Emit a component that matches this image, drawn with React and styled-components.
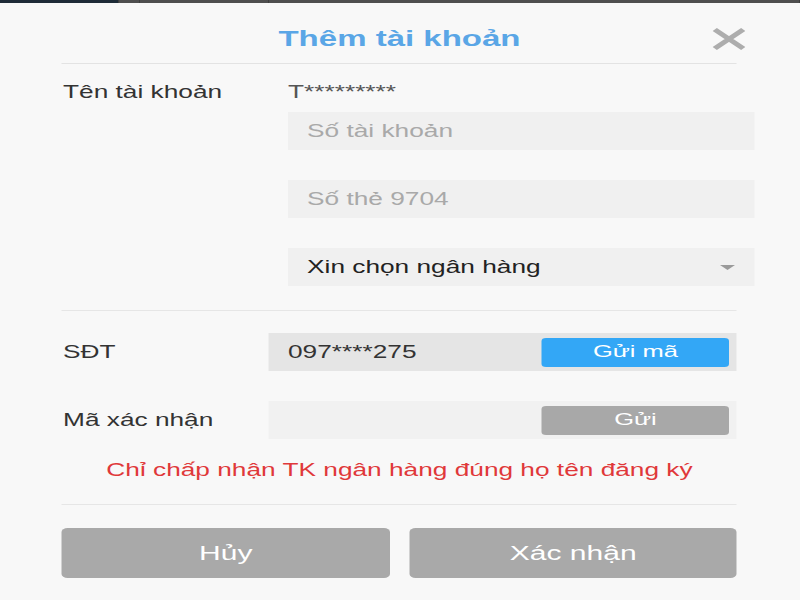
import styled, { createGlobalStyle } from "styled-components";

const GlobalStyle = createGlobalStyle`
  html, body {
    margin: 0;
    padding: 0;
    background: #f8f8f8;
    overflow: hidden;
  }
  body {
    font-family: "Liberation Sans", Arial, sans-serif;
    color: #333;
  }
`;

const Page = styled.div`
  width: 800px;
  height: 600px;
  overflow: hidden;
  background: #f8f8f8;
`;

const TopStrip = styled.div`
  display: flex;
  height: 3px;
`;

const StripSegment = styled.div`
  width: ${(props) => props.width ?? "auto"};
  flex: ${(props) => (props.width ? "none" : 1)};
  background: ${(props) => props.color};
  border-right: 1px solid #3e3e3e;
`;

/* the screenshot is a phone view stretched sideways, so the dialog is laid out narrow and widened */
const Stretch = styled.div`
  width: 533.33px;
  transform: scaleX(1.5);
  transform-origin: left top;
`;

const Dialog = styled.div`
  background: #f8f8f8;
  padding: 0 42px 0 41.33px;
`;

const Header = styled.div`
  position: relative;
  padding: 21px 0 9px;
  text-align: center;
  border-bottom: 1px solid #e3e3e3;
`;

const Title = styled.h2`
  margin: 0;
  font-size: 22px;
  line-height: 30px;
  font-weight: 700;
  color: #5aa6e6;
`;

const CloseButton = styled.button`
  position: absolute;
  top: 25px;
  right: -5.4px;
  width: 22px;
  height: 22px;
  padding: 0;
  border: 0;
  background: none;
  cursor: pointer;

  svg {
    display: block;
  }
`;

const AccountSection = styled.div`
  display: grid;
  grid-template-columns: 150.7px 1fr;
  padding: 18px 0 24px;
  border-bottom: 1px solid #e6e6e6;
`;

const Label = styled.div`
  font-size: 17.5px;
  line-height: 20px;
  color: #333;
  padding-left: 0.7px;
`;

const ValueStack = styled.div`
  display: flex;
  flex-direction: column;
  gap: 30px;
  margin-right: -12px;
`;

const MaskedValue = styled.div`
  font-size: 17.5px;
  line-height: 20px;
  color: #555;
  margin-bottom: -20px;
`;

const Field = styled.div`
  display: flex;
  align-items: center;
  justify-content: space-between;
  height: 38px;
  padding: 0 13px 0 12.7px;
  background: #f0f0f0;
  font-size: 17.5px;
  color: ${(props) => (props.placeholder ? "#a9a9a9" : "#222")};
`;

const Caret = styled.span`
  width: 0;
  height: 0;
  border-left: 5px solid transparent;
  border-right: 5px solid transparent;
  border-top: 5px solid #9a9a9a;
`;

const VerifySection = styled.div`
  display: flex;
  flex-direction: column;
  gap: 30px;
  padding: 22px 0 24px;
  border-bottom: 1px solid #e6e6e6;
`;

const VerifyRow = styled.div`
  display: grid;
  grid-template-columns: 138px 1fr;
  align-items: center;
`;

const CodeBox = styled.div`
  display: flex;
  align-items: center;
  justify-content: space-between;
  height: 38px;
  padding: 0 5.33px 0 12.7px;
  background: ${(props) => (props.dark ? "#e5e5e5" : "#f1f1f1")};
  font-size: 17.5px;
  color: #333;
`;

const SendButton = styled.button`
  width: 124.7px;
  height: 29px;
  border: 0;
  border-radius: 3px;
  background: ${(props) => (props.active ? "#33a7f6" : "#a8a8a8")};
  color: #fff;
  font-family: inherit;
  font-size: 17px;
  padding: 0;
`;

const Notice = styled.div`
  margin-top: -9px;
  text-align: center;
  font-size: 17.5px;
  line-height: 20px;
  color: #e0383a;
`;

const Footer = styled.div`
  display: grid;
  grid-template-columns: 1fr 1fr;
  gap: 13.33px;
  padding: 23px 0 24px;
`;

const ActionButton = styled.button`
  height: 50px;
  border: 0;
  border-radius: 4px;
  background: #a9a9a9;
  color: #fff;
  font-family: inherit;
  font-size: 20px;
  padding: 0;
`;

const CloseIcon = () => (
  <svg width="22" height="22" viewBox="0 0 22 22">
    <path d="M1.5 1.5 L20.5 20.5 M20.5 1.5 L1.5 20.5" stroke="#adadad" strokeWidth="4" strokeLinecap="butt" />
  </svg>
);

export default function App() {
  return (
    <Page>
      <GlobalStyle />
      <TopStrip>
        <StripSegment width="118px" color="#1e2b37" />
        <StripSegment width="20px" color="#4f4f4f" />
        <StripSegment width="128px" color="#4f4f4f" />
        <StripSegment color="#4f4f4f" />
      </TopStrip>
      <Stretch>
        <Dialog>
          <Header>
            <Title>Thêm tài khoản</Title>
            <CloseButton aria-label="Đóng">
              <CloseIcon />
            </CloseButton>
          </Header>

          <AccountSection>
            <Label>Tên tài khoản</Label>
            <ValueStack>
              <MaskedValue>T*********</MaskedValue>
              <Field placeholder>Số tài khoản</Field>
              <Field placeholder>Số thẻ 9704</Field>
              <Field>
                Xin chọn ngân hàng
                <Caret />
              </Field>
            </ValueStack>
          </AccountSection>

          <VerifySection>
            <VerifyRow>
              <Label>SĐT</Label>
              <CodeBox dark>
                097****275
                <SendButton active>Gửi mã</SendButton>
              </CodeBox>
            </VerifyRow>
            <VerifyRow>
              <Label>Mã xác nhận</Label>
              <CodeBox>
                <span />
                <SendButton>Gửi</SendButton>
              </CodeBox>
            </VerifyRow>
            <Notice>Chỉ chấp nhận TK ngân hàng đúng họ tên đăng ký</Notice>
          </VerifySection>

          <Footer>
            <ActionButton>Hủy</ActionButton>
            <ActionButton>Xác nhận</ActionButton>
          </Footer>
        </Dialog>
      </Stretch>
    </Page>
  );
}
